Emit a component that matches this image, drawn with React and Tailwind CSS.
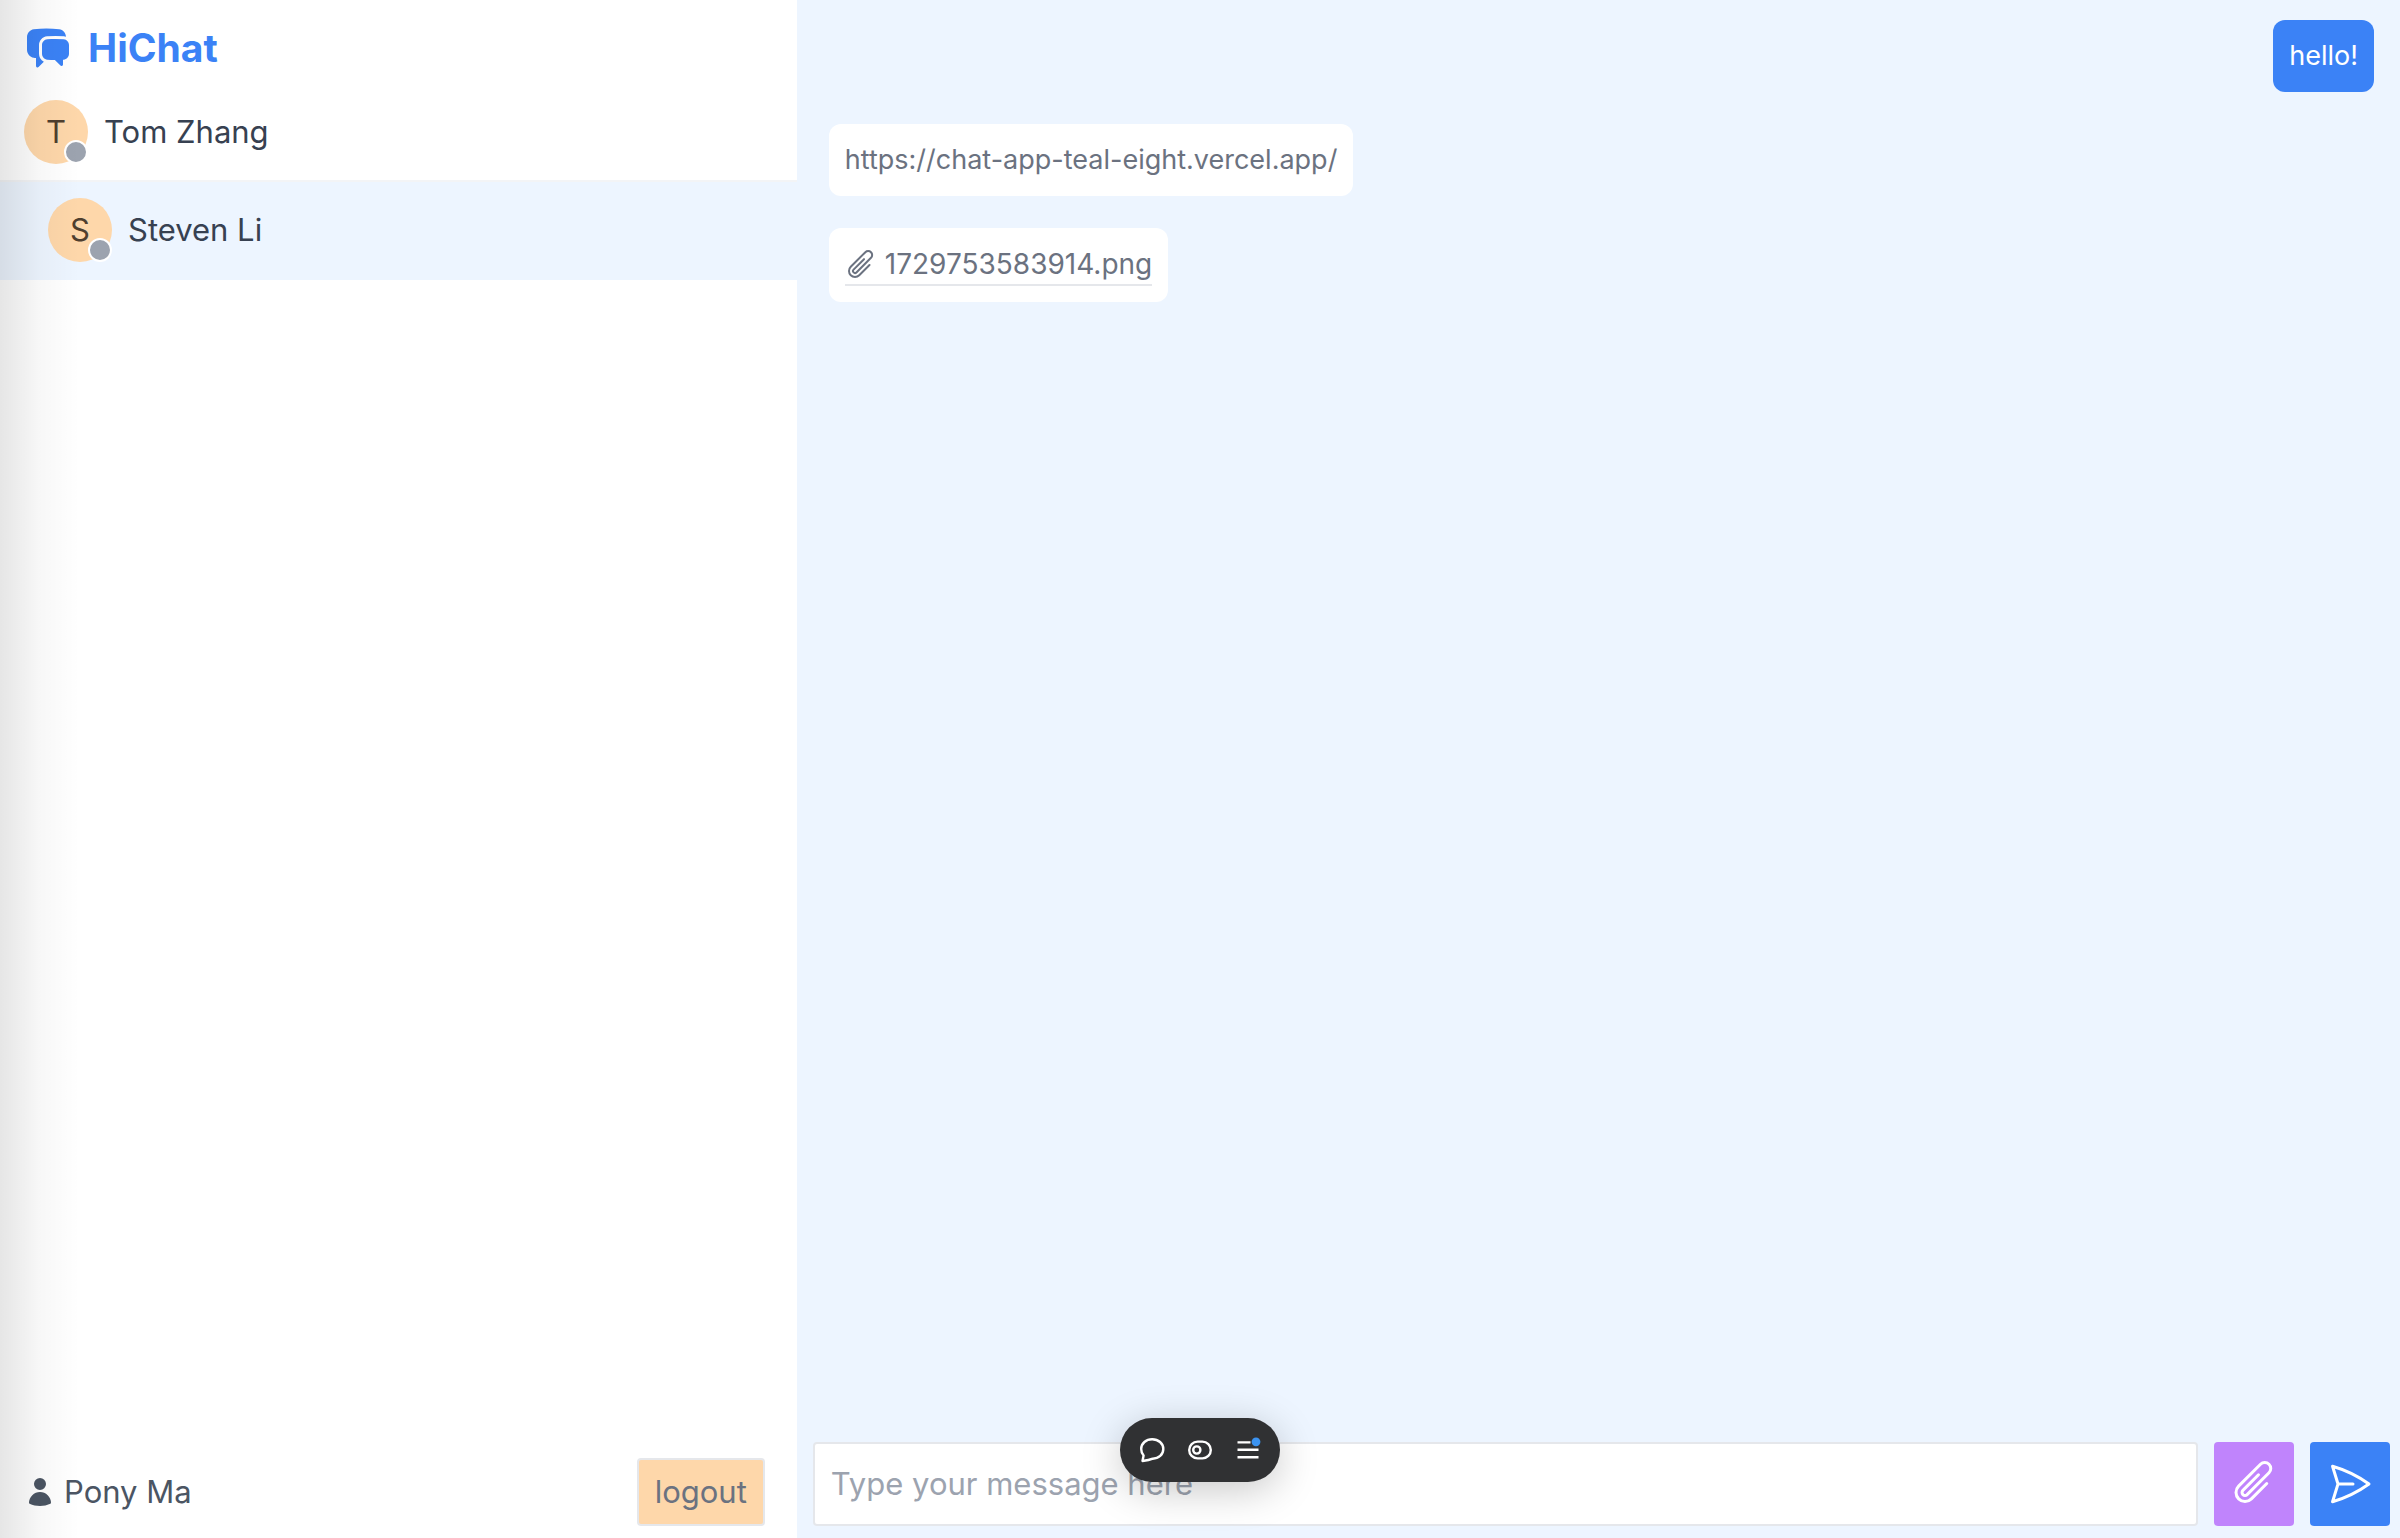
import { useState } from 'react';
import {
    HiChatBubbleLeftRight,
    HiOutlinePaperAirplane,
    HiOutlinePaperClip,
    HiUser,
} from 'react-icons/hi2';

const contacts = [
    { id: 1, name: 'Tom Zhang', online: false },
    { id: 2, name: 'Steven Li', online: false },
];

const messages = [
    { id: 1, own: true, text: 'hello!' },
    { id: 2, own: false, text: 'https://chat-app-teal-eight.vercel.app/' },
    { id: 3, own: false, file: '1729753583914.png' },
];

const Avatar = ({ name, online }) => (
    <div className="relative flex size-16 shrink-0 items-center justify-center rounded-full bg-[#fed7aa]">
        <span className="text-[#4f3f2f]">{name[0]}</span>
        <span className={`absolute right-0 bottom-0 size-6 rounded-full border-2 border-white ${online ? 'bg-green-400' : 'bg-[#9ca3af]'}`} />
    </div>
);

const Contact = ({ contact, selected, onSelect }) => (
    <button
        onClick={() => onSelect(contact.id)}
        className={`flex w-full items-center gap-4 border-b-2 py-4 text-left text-[#374151] ${selected ? 'border-[#edf5ff] bg-[#edf5ff] pl-12' : 'border-[#f3f4f6] pl-6'}`}
    >
        <Avatar name={contact.name} online={contact.online} />
        <span>{contact.name}</span>
    </button>
);

const Message = ({ message }) => (
    <div className={message.own ? 'text-right' : 'text-left'}>
        <div className={`inline-block rounded-xl p-4 align-top text-[27px] leading-10 ${message.own ? 'bg-[#3b82f6] text-white' : 'bg-white text-[#6b7280]'}`}>
            {message.text}
            {message.file && (
                <a href="#file" className="flex items-center gap-2 border-b-2 border-[#e5e7eb] text-[28px]">
                    <HiOutlinePaperClip size={32} />
                    {message.file}
                </a>
            )}
        </div>
    </div>
);

// Floating toolbar that sits over the message form
const Toolbar = () => (
    <div className="absolute bottom-14 left-1/2 flex h-16 -translate-x-1/2 items-center rounded-full bg-[#303133] px-2 text-white shadow-[0_8px_40px_rgba(0,0,0,0.22)]">
        <button aria-label="Comment" className="flex w-12 justify-center">
            <svg width="26" height="26" viewBox="0 0 26 26" fill="none" stroke="currentColor" strokeWidth="2.4" strokeLinejoin="round">
                <path d="M3.5 24 4.6 18.5C2.8 16.5 2.2 14.2 2.2 12 2.2 6.4 7 2.2 13.2 2.2S24.3 6.4 24.3 12 19.6 21.7 13.8 21.7C11 23 8 23.6 3.5 24Z" />
            </svg>
        </button>
        <button aria-label="Draft mode" className="flex w-12 justify-center">
            <svg width="26" height="20" viewBox="0 0 26 20" fill="none" stroke="currentColor" strokeWidth="2.4">
                <rect x="2.2" y="1.6" width="21.6" height="16.8" rx="8.4" />
                <circle cx="9.8" cy="10" r="3.6" />
            </svg>
        </button>
        <button aria-label="Menu" className="flex w-12 justify-center">
            <svg width="26" height="28" viewBox="0 -4 26 28" fill="none" stroke="currentColor" strokeWidth="2.4">
                <path d="M2.5 2.4h13M2.5 9.8h21M2.5 17.2h21" />
                <circle cx="21" cy="1.8" r="4.4" fill="#3b93f0" stroke="none" />
            </svg>
        </button>
    </div>
);

export default function App() {
    const [selectedId, setSelectedId] = useState(2);
    const [text, setText] = useState('');

    return (
        <div className="relative flex h-screen overflow-hidden bg-white font-[Inter,sans-serif] text-[31px] leading-[48px]">
            <aside className="flex w-[33.2%] flex-col">
                <h1 className="flex items-center gap-4 px-6 pt-6 pb-3 text-[39px] font-bold text-[#3b82f6]">
                    <HiChatBubbleLeftRight size={48} />
                    HiChat
                </h1>
                <div className="grow">
                    {contacts.map((contact) => (
                        <Contact
                            key={contact.id}
                            contact={contact}
                            selected={contact.id === selectedId}
                            onSelect={setSelectedId}
                        />
                    ))}
                </div>
                <div className="flex items-center justify-between pr-8 pb-3 pl-6">
                    <span className="flex items-center gap-2 text-[#4b5563]">
                        <HiUser size={32} />
                        Pony Ma
                    </span>
                    <button className="rounded border-2 border-[#e5e7eb] bg-[#fed7aa] px-4 py-2 text-[#6b7280]">
                        logout
                    </button>
                </div>
            </aside>

            <main className="flex min-w-0 flex-1 flex-col bg-[#edf5ff] pt-5 pr-[10px] pb-3 pl-4">
                <div className="flex grow flex-col gap-8 px-4">
                    {messages.map((message) => (
                        <Message key={message.id} message={message} />
                    ))}
                </div>
                <form className="flex gap-4" onSubmit={(e) => e.preventDefault()}>
                    <input
                        type="text"
                        aria-label="Message"
                        value={text}
                        onChange={(e) => setText(e.target.value)}
                        placeholder="Type your message here"
                        className="min-w-0 grow rounded border-2 border-[#e5e7eb] bg-white p-4 placeholder:text-[#9ca3af]"
                    />
                    <label className="flex w-20 cursor-pointer items-center justify-center rounded bg-[#c084fc] pb-1 text-white">
                        <input type="file" aria-label="Attach a file" className="hidden" />
                        <HiOutlinePaperClip size={48} />
                    </label>
                    <button type="submit" aria-label="Send" className="flex w-20 items-center justify-center rounded bg-[#3b82f6] text-white">
                        <HiOutlinePaperAirplane size={48} />
                    </button>
                </form>
            </main>

            <div className="pointer-events-none absolute inset-y-0 left-0 w-20 bg-linear-to-r from-black/10 via-black/3 to-transparent" />
            <Toolbar />
        </div>
    );
}
